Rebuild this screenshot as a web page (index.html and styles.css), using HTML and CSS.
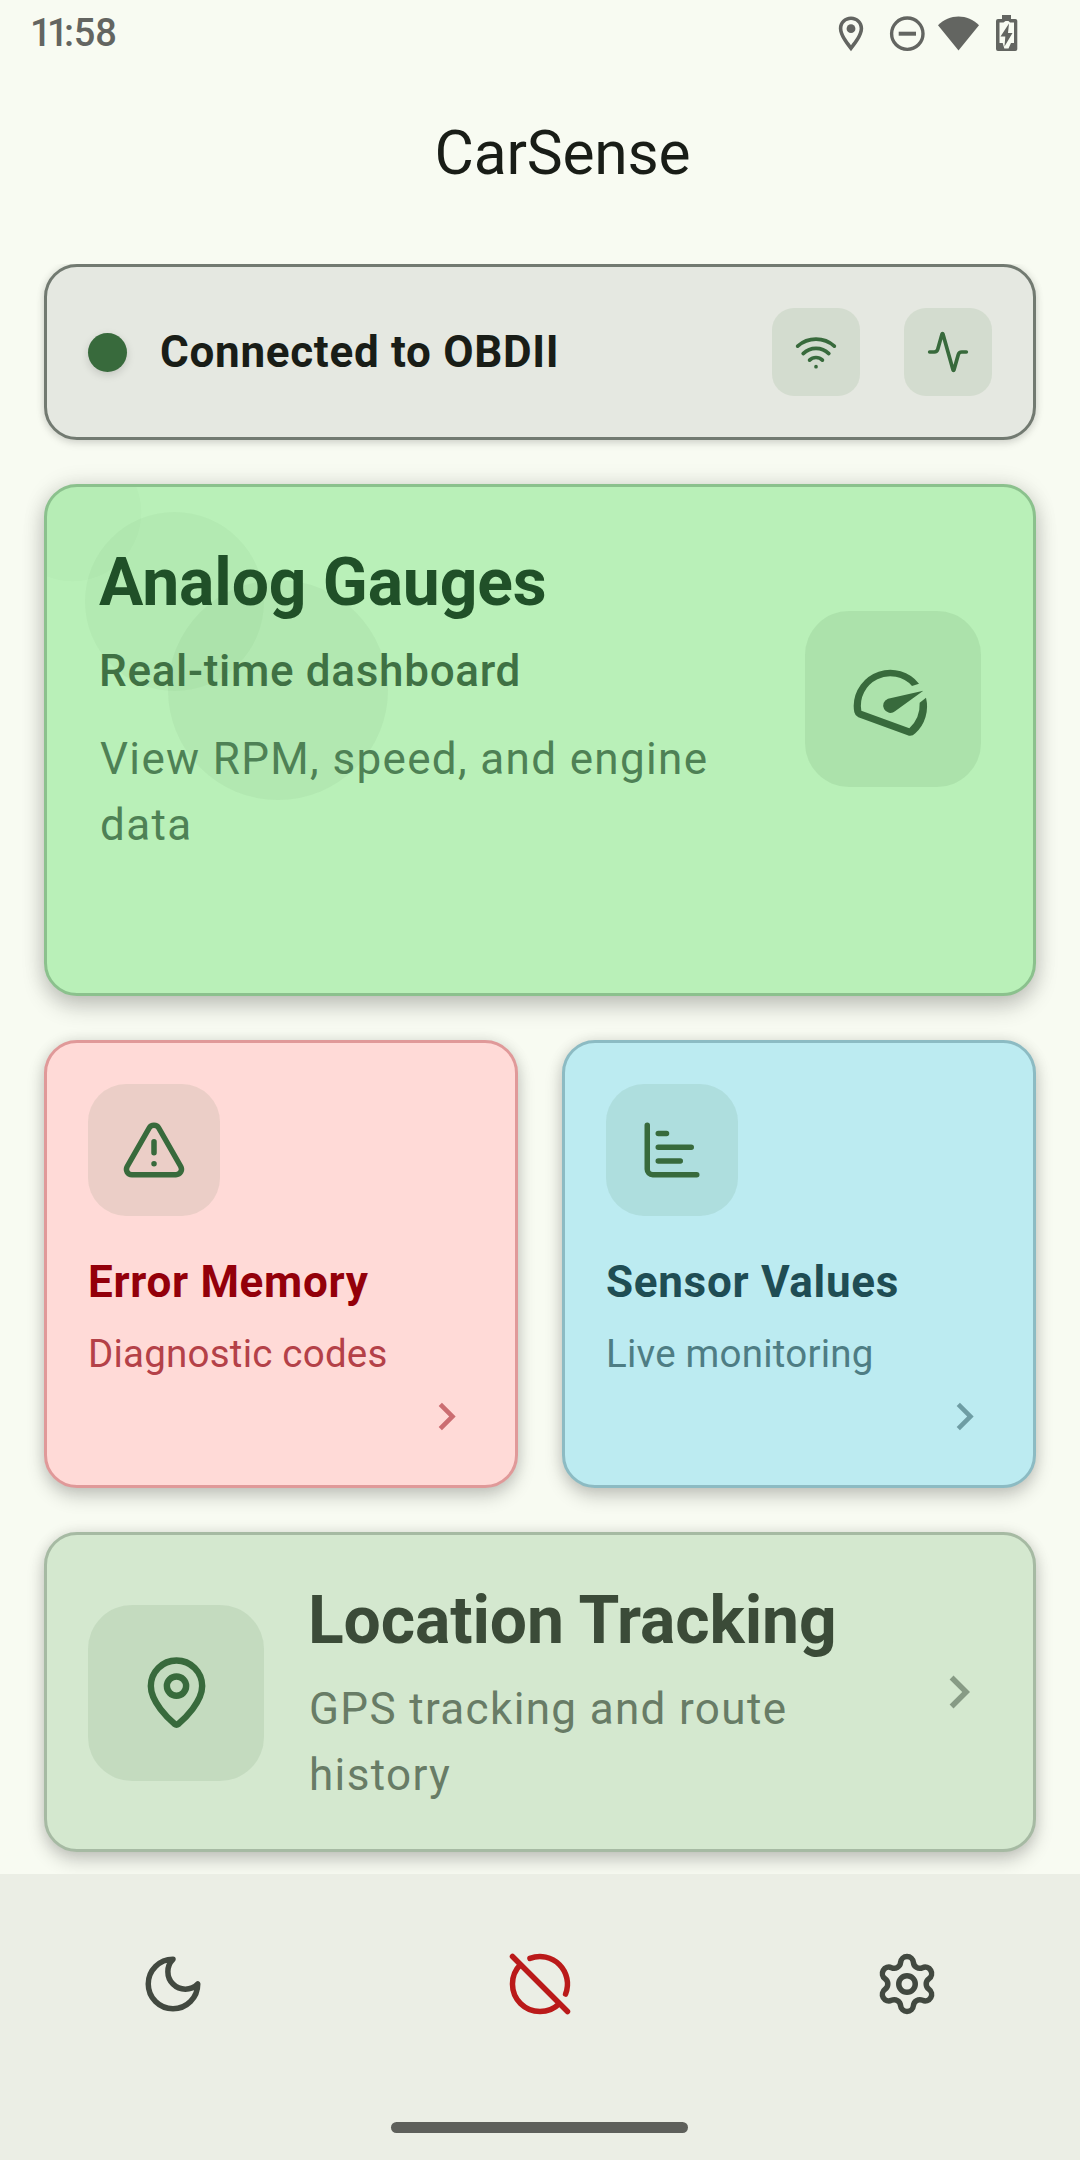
FILE: index.html
```html
<!DOCTYPE html>
<html lang="en">
<head>
<meta charset="utf-8">
<title>CarSense</title>
<link rel="stylesheet" href="styles.css">
</head>
<body>
<div class="screen">
  <header class="status-bar">
    <span class="clock"><span class="clock-hour">11</span>:58</span>
    <svg class="status-icons" viewBox="0 0 184 44" width="184" height="44" fill="#636561">
      <path fill-rule="evenodd" d="M15 8.500C8.200 8.500 2.800 13.500 2.800 20.500C2.800 28.500 11 37.500 15 43.300C19 37.500 27.200 28.500 27.200 20.500C27.200 13.500 21.800 8.500 15 8.500ZM15 12C19.800 12 23.600 15.500 23.600 20.500C23.600 26 18.500 32.500 15 37.200C11.500 32.500 6.400 26 6.400 20.500C6.400 15.500 10.200 12 15 12Z"/>
      <circle cx="15" cy="20.700" r="4.400"/>
      <circle cx="71.300" cy="25.700" r="15.700" fill="none" stroke="#636561" stroke-width="3.400"/>
      <rect x="62.700" y="23.700" width="17.300" height="4"/>
      <path d="M102 17.300C113 5.500 132 5.500 143 17.300L122.500 42.500Z"/>
      <path fill-rule="evenodd" d="M166 7h9v4h4.300q2 0 2 2v28q0 2-2 2H162q-2 0-2-2V13q0-2 2-2h4ZM163.500 14.500V35h3.200l1.600 5.500h4.200L175 35h3V14.500h-4l-1.500-1.500h-3l-2 1.500Z"/>
      <path d="M173 15.500L164.500 28.500H169.300L168.500 38.500L176.500 25H172Z"/>
    </svg>
  </header>

  <h1 class="app-title">CarSense</h1>

  <main class="content">
    <section class="card connection">
      <span class="dot"></span>
      <span class="connection-text">Connected to OBDII</span>
      <span class="tile tile-sm">
        <svg class="line" width="44" height="44" viewBox="0 0 24 24"><path d="M12 20h.01M2 8.820a15 15 0 0 1 20 0M5 12.859a10 10 0 0 1 14 0M8.500 16.429a5 5 0 0 1 7 0"/></svg>
      </span>
      <span class="tile tile-sm">
        <svg class="line" width="44" height="44" viewBox="0 0 24 24"><path d="M22 12h-2.480a2 2 0 0 0-1.930 1.460l-2.350 8.360a.25.25 0 0 1-.48 0L9.240 2.180a.25.25 0 0 0-.48 0l-2.350 8.360A2 2 0 0 1 4.490 12H2"/></svg>
      </span>
    </section>

    <section class="card gauges">
      <svg class="bubbles" width="360" height="330" viewBox="47 487 360 330" fill="#386a3c">
        <circle cx="72.500" cy="512.500" r="68.750" fill-opacity=".02"/>
        <circle cx="174.500" cy="601.500" r="89.500" fill-opacity=".04"/>
        <circle cx="278" cy="690" r="110" fill-opacity=".05"/>
      </svg>
      <div class="gauges-row">
        <div class="gauges-text">
          <h2 class="headline">Analog Gauges</h2>
          <p class="subtitle">Real-time dashboard</p>
          <p class="body-text">View RPM, speed, and engine data</p>
        </div>
        <span class="tile tile-lg">
          <svg width="88" height="88" viewBox="0 0 264 264" fill="#386a3c">
            <path d="M210 86A110 110 0 0 0 14 152Q14 162 16 172Q18 182 28 187L176 241Q188 246 199 235A110 110 0 0 0 231 128L212 143Q214 188 181 220L37 167A88 88 0 0 1 189 93Z"/>
            <path d="M223 107L117 131A22 22 0 1 0 138 169Z"/>
          </svg>
        </span>
      </div>
    </section>

    <div class="pair">
      <section class="card small errors">
        <span class="tile tile-md">
          <svg class="line" width="66" height="66" viewBox="0 0 24 24"><path d="m21.730 18-8-14a2 2 0 0 0-3.480 0l-8 14A2 2 0 0 0 4 21h16a2 2 0 0 0 1.730-3M12 9v4M12 17h.01"/></svg>
        </span>
        <h3 class="card-title">Error Memory</h3>
        <p class="card-note">Diagnostic codes</p>
        <svg class="chevron" width="55" height="55" viewBox="0 0 24 24"><path d="M10 6 8.590 7.410 13.170 12l-4.580 4.590L10 18l6-6z"/></svg>
      </section>
      <section class="card small sensors">
        <span class="tile tile-md">
          <svg class="line" width="66" height="66" viewBox="0 0 24 24"><path d="M3 3v16a2 2 0 0 0 2 2h16M7 16h8M7 11h12M7 6h3"/></svg>
        </span>
        <h3 class="card-title">Sensor Values</h3>
        <p class="card-note">Live monitoring</p>
        <svg class="chevron" width="55" height="55" viewBox="0 0 24 24"><path d="M10 6 8.590 7.410 13.170 12l-4.580 4.590L10 18l6-6z"/></svg>
      </section>
    </div>

    <section class="card location">
      <span class="tile tile-lg">
        <svg class="line" width="77" height="77" viewBox="0 0 24 24"><path d="M20 10c0 4.993-5.539 10.193-7.399 11.799a1 1 0 0 1-1.202 0C9.539 20.193 4 14.993 4 10a8 8 0 0 1 16 0"/><circle cx="12" cy="10" r="3"/></svg>
      </span>
      <div class="location-text">
        <h2 class="headline">Location Tracking</h2>
        <p class="body-text">GPS tracking and route history</p>
      </div>
      <svg class="chevron" width="66" height="66" viewBox="0 0 24 24"><path d="M10 6 8.590 7.410 13.170 12l-4.580 4.590L10 18l6-6z"/></svg>
    </section>
  </main>

  <nav class="nav">
    <div class="nav-items">
      <span class="nav-item"><svg class="line" width="66" height="66" viewBox="0 0 24 24"><path d="M12 3a6 6 0 0 0 9 9 9 9 0 1 1-9-9Z"/></svg></span>
      <span class="nav-item nav-danger"><svg class="line" width="66" height="66" viewBox="0 0 24 24"><path d="m2 2 20 20M8.350 2.690A10 10 0 0 1 21.300 15.650M19.080 19.080A10 10 0 1 1 4.920 4.920"/></svg></span>
      <span class="nav-item"><svg class="line" width="66" height="66" viewBox="0 0 24 24"><path d="M9.671 4.136a2.340 2.340 0 0 1 4.659 0 2.340 2.340 0 0 0 3.319 1.915 2.340 2.340 0 0 1 2.330 4.033 2.340 2.340 0 0 0 0 3.831 2.340 2.340 0 0 1-2.330 4.033 2.340 2.340 0 0 0-3.319 1.915 2.340 2.340 0 0 1-4.659 0 2.340 2.340 0 0 0-3.320-1.915 2.340 2.340 0 0 1-2.330-4.033 2.340 2.340 0 0 0 0-3.831A2.340 2.340 0 0 1 6.350 6.051a2.340 2.340 0 0 0 3.319-1.915"/><circle cx="12" cy="12" r="3"/></svg></span>
    </div>
    <div class="home-bar"></div>
  </nav>
</div>
</body>
</html>
```
FILE: styles.css
```css
* { box-sizing: border-box; }

body {
  margin: 0;
  background: #f8fbf2;
  font-family: Roboto, "Noto Sans", sans-serif;
}

h1, h2, h3, p { margin: 0; }
svg { display: block; flex: none; }

.screen {
  width: 1080px;
  height: 2160px;
  display: flex;
  flex-direction: column;
  overflow: hidden;
}

.status-bar {
  height: 66px;
  flex: none;
  display: flex;
  justify-content: space-between;
  align-items: center;
  padding: 0 60px 0 30px;
}

.clock {
  font-size: 38px;
  font-weight: 500;
  line-height: 67px;
  letter-spacing: -.2px;
  color: #636561;
}
.clock-hour { letter-spacing: -4.6px; }

.status-icons { margin-top: -6px; }

.app-title {
  height: 198px;
  flex: none;
  padding: 44px 0 0 45px;
  font-size: 60.5px;
  font-weight: 400;
  line-height: 88px;
  letter-spacing: -.2px;
  color: #191d17;
  text-align: center;
}

.content {
  flex: 1;
  min-height: 0;
  overflow: hidden;
  padding: 0 44px;
  display: flex;
  flex-direction: column;
  gap: 44px;
}

.card {
  flex: none;
  position: relative;
  border: 3px solid;
  border-radius: 33px;
  box-shadow: 0 9px 18px rgba(0, 0, 0, .19), 0 0 14px rgba(0, 0, 0, .1);
}

.tile {
  flex: none;
  display: flex;
  align-items: center;
  justify-content: center;
  background: rgba(56, 106, 60, .1);
  color: #386a3c;
}
.tile-sm { width: 88px; height: 88px; border-radius: 22px; }
.tile-md { width: 132px; height: 132px; border-radius: 38px; }
.tile-lg { width: 176px; height: 176px; border-radius: 44px; }

.line {
  fill: none;
  stroke: currentColor;
  stroke-width: 2;
  stroke-linecap: round;
  stroke-linejoin: round;
}

.chevron { fill: currentColor; }

.headline {
  font-size: 66px;
  font-weight: 700;
  line-height: 88px;
  letter-spacing: -.1px;
}

.body-text {
  padding-left: 1px;
  font-size: 44px;
  line-height: 66px;
  letter-spacing: 1.35px;
}

/* Connection status */
.connection {
  height: 176px;
  display: flex;
  align-items: center;
  padding: 0 41px;
  background: #e5e8e1;
  border-color: #727a71;
  box-shadow: 0 3px 8px rgba(0, 0, 0, .13), 0 0 8px rgba(0, 0, 0, .08);
}
.connection .tile { background: rgba(56, 116, 50, .1); }
.dot {
  width: 39px;
  height: 39px;
  border-radius: 50%;
  background: #386a3c;
  box-shadow: 0 3px 8px rgba(0, 0, 0, .15);
}
.connection-text {
  flex: 1;
  padding-left: 33px;
  font-size: 44px;
  font-weight: 700;
  line-height: 66px;
  letter-spacing: .7px;
  color: #191d17;
}
.connection .tile + .tile { margin-left: 44px; }

/* Analog gauges */
.gauges {
  height: 512px;
  padding: 52px;
  background: #b9f0b8;
  border-color: #8bc18d;
  overflow: hidden;
  box-shadow: 0 11px 22px rgba(0, 0, 0, .19), 0 0 22px rgba(0, 0, 0, .12);
}
.bubbles { position: absolute; left: 0; top: 0; }
.gauges-row {
  position: relative;
  display: flex;
  align-items: center;
}
.gauges-text { flex: 1; }
.gauges .headline { color: #205028; }
.gauges .subtitle {
  margin-top: 11px;
  font-size: 44px;
  font-weight: 500;
  line-height: 66px;
  letter-spacing: .7px;
  color: #3f7144;
}
.gauges .body-text { margin-top: 22px; padding-right: 44px; color: #4e8155; }

/* Two-up cards */
.pair {
  flex: none;
  display: grid;
  grid-template-columns: 1fr 1fr;
  gap: 44px;
}
.small {
  height: 448px;
  padding: 41px;
  display: flex;
  flex-direction: column;
}
.card-title {
  margin-top: 33px;
  font-size: 44px;
  font-weight: 700;
  line-height: 66px;
  letter-spacing: .7px;
}
.card-note {
  margin-top: 11px;
  font-size: 38.5px;
  line-height: 55px;
  letter-spacing: .22px;
}
.small .chevron { margin: auto 0 0 auto; }

.errors { background: #ffdad7; border-color: #e09999; }
.errors .card-title { color: #93000a; }
.errors .card-note { color: #b44148; }
.errors .chevron { color: #cb6d71; }

.sensors { background: #bcebf1; border-color: #8cbbc3; }
.sensors .card-title { color: #1f4d54; }
.sensors .card-note { color: #4e7d84; }
.sensors .chevron { color: #6e9da4; }

/* Location tracking */
.location {
  height: 320px;
  display: flex;
  align-items: center;
  padding: 0 41px;
  background: #d4e8cf;
  border-color: #a6baa3;
}
.location .tile { margin-top: 1px; }
.location-text { flex: 1; margin-left: 44px; }
.location .headline { color: #3b4b38; }
.location .body-text { margin-top: 11px; padding-right: 60px; color: #687c66; }
.location .chevron { color: #879b85; }

/* Bottom navigation */
.nav {
  height: 286px;
  flex: none;
  display: flex;
  flex-direction: column;
  justify-content: space-between;
  align-items: center;
  padding: 0 1px 27px 0;
  background: #ebeee5;
}
.nav-items {
  width: 100%;
  height: 220px;
  display: grid;
  grid-template-columns: repeat(3, 1fr);
  gap: 22px;
}
.nav-item {
  display: flex;
  align-items: center;
  justify-content: center;
  color: #424940;
}
.nav-danger { color: #ba1a1a; }
.home-bar {
  width: 297px;
  height: 11px;
  border-radius: 6px;
  background: #5e605b;
}
```
